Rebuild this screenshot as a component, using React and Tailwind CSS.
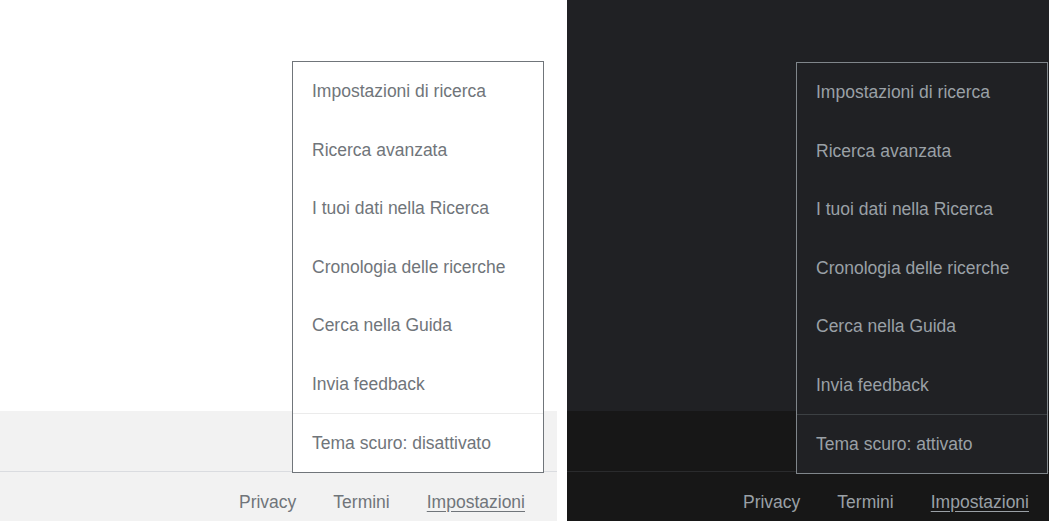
import React from 'react';

const items = [
  'Impostazioni di ricerca',
  'Ricerca avanzata',
  'I tuoi dati nella Ricerca',
  'Cronologia delle ricerche',
  'Cerca nella Guida',
  'Invia feedback',
];

function Panel({ dark, className, menuClass, footerClass }) {
  return (
    <div className={`relative flex flex-col h-full ${className}`}>
      <div className={`h-[411px] ${dark ? 'bg-[#202124]' : 'bg-white'}`} />
      <div className={`h-[61px] border-b ${dark ? 'bg-[#171717] border-[#2a2b2d]' : 'bg-[#f2f2f2] border-[#dadce0]'}`} />
      <div
        className={`flex-1 flex items-center justify-end gap-[37px] pt-[11px] ${footerClass} ${
          dark ? 'bg-[#171717] text-[#9aa0a6]' : 'bg-[#f2f2f2] text-[#70757a]'
        }`}
      >
        <span>Privacy</span>
        <span>Termini</span>
        <span className="underline underline-offset-[3px]">Impostazioni</span>
      </div>

      {/* menu */}
      <div
        className={`absolute w-[252px] border flex flex-col ${menuClass} ${
          dark ? 'bg-[#202124] border-[#80868b] text-[#9aa0a6]' : 'bg-white border-[#70757a] text-[#70757a]'
        }`}
      >
        {items.map((t) => (
          <div key={t} className="h-[58.5px] flex items-center px-[19px]">
            {t}
          </div>
        ))}
        <div className={`h-[59px] flex items-center px-[19px] border-t ${dark ? 'border-[#3c4043]' : 'border-[#ebebeb]'}`}>
          {dark ? 'Tema scuro: attivato' : 'Tema scuro: disattivato'}
        </div>
      </div>
    </div>
  );
}

export default function App() {
  return (
    <div
      className="flex w-[1049px] h-[521px] bg-white overflow-hidden text-[17.5px]"
      style={{ fontFamily: '"Liberation Sans", Arial, sans-serif' }}
    >
      <Panel className="w-[557px]" menuClass="top-[61px] left-[292px]" footerClass="pr-[32px]" />
      <div className="w-[10px] bg-white" />
      <Panel dark className="w-[482px]" menuClass="top-[62px] left-[229px]" footerClass="pr-[20px]" />
    </div>
  );
}
